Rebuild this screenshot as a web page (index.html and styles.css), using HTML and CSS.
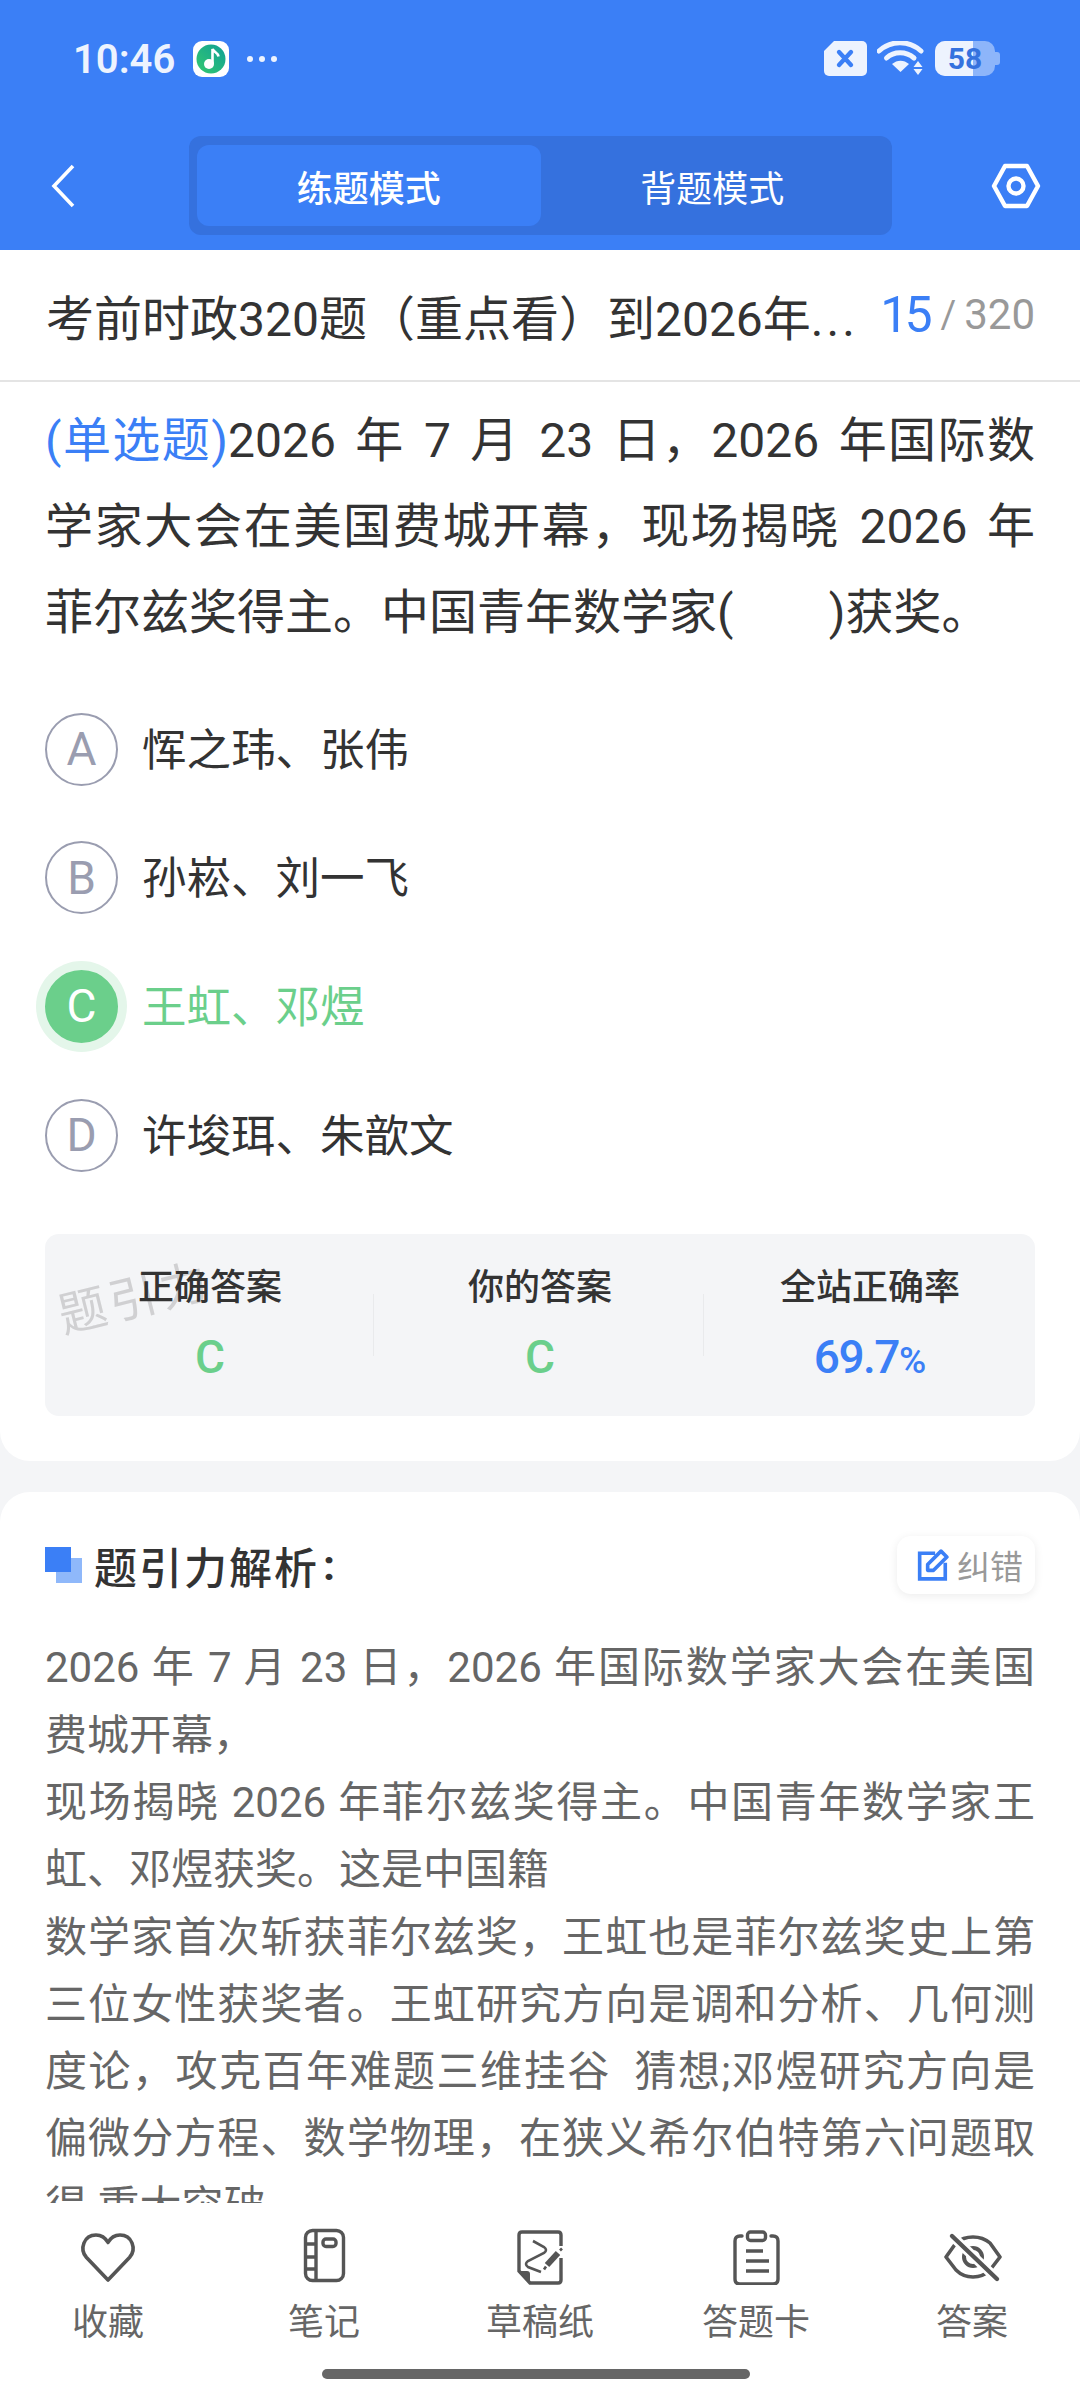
FILE: index.html
```html
<!DOCTYPE html>
<html lang="zh-CN">
<head>
  <meta charset="UTF-8">
  <title>练题模式</title>
  <link rel="stylesheet" href="styles.css">
</head>
<body>
  <div class="app">
    <header class="top">
      <div class="status-bar">
        <div class="status-left">
          <span class="clock">10:46</span>
          <svg class="music-icon" width="36" height="36" viewBox="0 0 36 36">
            <defs>
              <linearGradient id="musicGrad" x1="0" y1="1" x2="1" y2="0">
                <stop offset="0" stop-color="#35c96f"/>
                <stop offset="1" stop-color="#0f9f96"/>
              </linearGradient>
            </defs>
            <rect width="36" height="36" rx="9" fill="#fff"/>
            <circle cx="18" cy="18" r="14.500" fill="url(#musicGrad)"/>
            <circle cx="16" cy="23" r="5" fill="#fff"/>
            <path d="M19.500 23V8c1 3 5.500 3.500 6 7.500" fill="none" stroke="#fff" stroke-width="2.600"/>
          </svg>
          <span class="dots"><i></i><i></i><i></i></span>
        </div>
        <div class="status-right">
          <svg width="43" height="35" viewBox="0 0 43 35">
            <path d="M10 0H38a5 5 0 0 1 5 5V30a5 5 0 0 1-5 5H5a5 5 0 0 1-5-5V10Z" fill="#edf3fe"/>
            <path d="M15 11l12 13M27 11L15 24" stroke="#3b7ff6" stroke-width="4.400" stroke-linecap="round"/>
          </svg>
          <svg width="48" height="35" viewBox="0 0 48 35">
            <path d="M2 10C14 -1 32 -1 44 10" fill="none" stroke="#edf3fe" stroke-width="5" stroke-linecap="round"/>
            <path d="M9.500 17C17 10 29 10 37 17" fill="none" stroke="#edf3fe" stroke-width="5" stroke-linecap="round"/>
            <path d="M15 23C20 18.500 27 18.500 32 23L23.500 31Z" fill="#edf3fe"/>
            <path d="M41 20l4.500 6h-9ZM36.500 28h9L41 34Z" fill="#edf3fe"/>
          </svg>
          <div class="battery">
            <span class="battery-fill"></span>
            <span class="battery-num">58</span>
            <span class="battery-nub"></span>
          </div>
        </div>
      </div>
      <div class="nav-row">
        <svg class="back" width="24" height="44" viewBox="0 0 24 44">
          <path d="M22 2L3 22l19 20" fill="none" stroke="#fff" stroke-width="3.600"/>
        </svg>
        <div class="tabs">
          <div class="tab active">练题模式</div>
          <div class="tab">背题模式</div>
        </div>
        <svg class="gear" width="50" height="46" viewBox="0 0 50 46">
          <path d="M14 3H36L47 23 36 43H14L3 23Z" fill="none" stroke="#fff" stroke-width="4.400" stroke-linejoin="round"/>
          <circle cx="25" cy="23" r="7.500" fill="none" stroke="#fff" stroke-width="4.400"/>
        </svg>
      </div>
    </header>

    <div class="title-row">
      <div class="paper-name">考前时政320题（重点看）到2026年<span class="more">...</span></div>
      <div class="counter"><span class="cur">15</span><span class="slash">/</span><span class="total">320</span></div>
    </div>

    <main class="scroll">
      <section class="card question">
        <p class="stem">
          <span class="stem-line"><span class="q-type">(单选题)</span>2026 年 7 月 23 日，2026 年国际数</span>
          <span class="stem-line">学家大会在美国费城开幕，现场揭晓 2026 年</span>
          <span>菲尔兹奖得主。中国青年数学家(&nbsp;&nbsp;&nbsp;&nbsp;&nbsp;&nbsp;&nbsp;&nbsp;)获奖。</span>
        </p>
        <ul class="options">
          <li class="option"><span class="letter">A</span><span class="opt-text">恽之玮、张伟</span></li>
          <li class="option"><span class="letter">B</span><span class="opt-text">孙崧、刘一飞</span></li>
          <li class="option right"><span class="letter">C</span><span class="opt-text">王虹、邓煜</span></li>
          <li class="option"><span class="letter">D</span><span class="opt-text">许埈珥、朱歆文</span></li>
        </ul>
        <div class="stats">
          <div class="watermark">题引力</div>
          <div class="stat">
            <div class="stat-label">正确答案</div>
            <div class="stat-value green">C</div>
          </div>
          <div class="stat">
            <div class="stat-label">你的答案</div>
            <div class="stat-value green">C</div>
          </div>
          <div class="stat">
            <div class="stat-label">全站正确率</div>
            <div class="stat-value blue"><span class="rate">69.7</span><small>%</small></div>
          </div>
        </div>
      </section>

      <section class="card analysis">
        <div class="analysis-head">
          <div class="analysis-title"><span class="squares"></span>题引力解析<span class="colon">:</span></div>
          <div class="fix-btn">
            <svg width="32" height="32" viewBox="0 0 30 30">
              <path d="M17 4H2.500V28H26.500V13" fill="none" stroke="#3b7ff6" stroke-width="3.400"/>
              <path d="M10 20V14.500L22.500 2 28 7.500 15.500 20Z" fill="none" stroke="#3b7ff6" stroke-width="3.400" stroke-linejoin="round"/>
            </svg>
            纠错
          </div>
        </div>
        <p class="analysis-text">2026 年 7 月 23 日，2026 年国际数学家大会在美国费城开幕，<br>现场揭晓 2026 年菲尔兹奖得主。中国青年数学家王虹、邓煜获奖。这是中国籍<br>数学家首次斩获菲尔兹奖，王虹也是菲尔兹奖史上第三位女性获奖者。王虹研究方向是调和分析、几何测度论，攻克百年难题三维挂谷&nbsp;&nbsp;猜想;邓煜研究方向是偏微分方程、数学物理，在狭义希尔伯特第六问题取得 重大突破。</p>
      </section>
    </main>

    <nav class="bottom">
      <div class="bottom-items">
        <div class="bottom-item">
          <svg width="60" height="60" viewBox="0 0 60 60" fill="none" stroke="#555" stroke-width="3.600">
            <path d="M30 55L8.500 32.500C1 24 6 10 18 10 23 10 27.500 13 30 17.500 32.500 13 37 10 42 10 54 10 59 24 51.500 32.500Z" stroke-linejoin="round"/>
          </svg>
          <span>收藏</span>
        </div>
        <div class="bottom-item">
          <svg width="60" height="60" viewBox="0 0 60 60" fill="none" stroke="#555" stroke-width="3.400">
            <rect x="11.500" y="5.500" width="38" height="50" rx="7"/>
            <path d="M22 5.500V55.500M11.500 19H22M11.500 32H22M11.500 44H22"/>
            <rect x="29" y="14" width="13" height="7.500" rx="3"/>
          </svg>
          <span>笔记</span>
        </div>
        <div class="bottom-item">
          <svg width="60" height="60" viewBox="0 0 60 60" fill="none" stroke="#555" stroke-width="3.400">
            <path d="M51 21V10Q51 7 48 7H12Q9 7 9 10V46L20 58H48Q51 58 51 55V33"/>
            <path d="M9 46H17Q20 46 20 49V58Z" fill="#555" stroke="none"/>
            <path d="M23 16L34 22Q38 25 34 28L18 36Q14 39 18 42L31 47" stroke-width="2.600"/>
            <path d="M37 40L48 28" stroke-width="6"/>
            <path d="M34 44.500L36 41.500M50 25.500L52 23.500" stroke-width="2.600"/>
          </svg>
          <span>草稿纸</span>
        </div>
        <div class="bottom-item">
          <svg width="60" height="60" viewBox="0 0 60 60" fill="none" stroke="#555" stroke-width="3.400">
            <path d="M16 11H14Q9 11 9 16V54Q9 59 14 59H47Q52 59 52 54V16Q52 11 47 11H45" stroke-linecap="round"/>
            <rect x="21.500" y="7" width="18" height="8.500" rx="3"/>
            <path d="M20 26H37M20 36H43M20 46H43"/>
          </svg>
          <span>答题卡</span>
        </div>
        <div class="bottom-item">
          <svg width="60" height="60" viewBox="0 0 60 60" fill="none" stroke="#555" stroke-width="3.600">
            <path d="M4 32L14 18Q21 12 31 12T48 18L58 32 48 45Q41 52 31 52T14 45Z" stroke-linejoin="round"/>
            <path d="M22 32A9 9 0 0 0 40 32A9 9 0 0 0 22 32" stroke-width="4"/>
            <path d="M10 11L55 54" stroke="#fff" stroke-width="10"/>
            <path d="M10 11L55 54" stroke-width="4.400" stroke-linecap="round"/>
          </svg>
          <span>答案</span>
        </div>
      </div>
      <div class="home-bar"></div>
    </nav>
  </div>
</body>
</html>
```

FILE: styles.css
```css
* {
  box-sizing: border-box;
}

html,
body {
  margin: 0;
  padding: 0;
}

body {
  font-family: Roboto, "Noto Sans CJK SC", sans-serif;
  background-color: #f4f5f7;
  color: #333;
}

.app {
  width: 1080px;
  height: 2400px;
  display: flex;
  flex-direction: column;
  overflow: hidden;
}

/* blue header */
.top {
  height: 250px;
  flex-shrink: 0;
  background-color: #3b7ff6;
}

.status-bar {
  height: 136px;
  padding: 41px 85px 0 73px;
  display: flex;
  justify-content: space-between;
  align-items: flex-start;
}

.status-left {
  display: flex;
  align-items: center;
  height: 36px;
}

.clock {
  font-size: 40px;
  font-weight: 600;
  color: #edf3fe;
  width: 120px;
}

.dots {
  display: flex;
  gap: 6px;
  margin-left: 18px;
}

.dots i {
  width: 6px;
  height: 6px;
  border-radius: 50%;
  background-color: #edf3fe;
}

.status-right {
  display: flex;
  align-items: flex-start;
  gap: 10px;
}

.battery {
  position: relative;
  width: 60px;
  height: 35px;
  border-radius: 10px;
  background-color: #8db5fa;
  text-align: center;
}

.battery-fill {
  position: absolute;
  left: 0;
  top: 0;
  width: 38px;
  height: 35px;
  border-radius: 10px 0 0 10px;
  background-color: #edf3fe;
}

.battery-num {
  position: relative;
  font-size: 30px;
  font-weight: 700;
  line-height: 35px;
  color: #3572de;
}

.battery-nub {
  position: absolute;
  right: -5px;
  top: 11px;
  width: 5px;
  height: 13px;
  border-radius: 0 3px 3px 0;
  background-color: #8db5fa;
}

.nav-row {
  height: 99px;
  display: flex;
  align-items: center;
  position: relative;
}

.back {
  margin-left: 51px;
}

.tabs {
  width: 703px;
  height: 99px;
  margin-left: 114px;
  padding: 9px 8px;
  display: flex;
  background-color: #3571de;
  border-radius: 12px;
}

.tab {
  flex: 1;
  display: flex;
  align-items: center;
  justify-content: center;
  font-size: 36px;
  color: #fff;
  border-radius: 12px;
}

.tab.active {
  background-color: #3b7ff6;
  font-weight: 500;
}

.gear {
  margin-left: 99px;
}

/* paper title */
.title-row {
  height: 132px;
  flex-shrink: 0;
  padding: 0 45px 0 46px;
  display: flex;
  align-items: center;
  background-color: #fff;
  border-bottom: 2px solid #e4e4e4;
}

.paper-name {
  flex: 1;
  min-width: 0;
  font-size: 48px;
  white-space: nowrap;
}

.more {
  letter-spacing: 3px;
}

.counter {
  display: flex;
  align-items: center;
  color: #999;
  font-size: 42px;
  line-height: 60px;
}

.cur {
  font-size: 50px;
  letter-spacing: -4px;
  color: #3b7ff6;
}

.slash {
  margin: 0 8px 0 12px;
  font-size: 38px;
}

/* scrolling content */
.scroll {
  flex: 1;
  min-height: 0;
  overflow: hidden;
}

.card {
  background-color: #fff;
}

.question {
  padding: 16px 45px 45px;
  border-radius: 0 0 30px 30px;
}

.stem {
  margin: 0;
  font-size: 48px;
  line-height: 86px;
}

.stem-line {
  display: block;
  word-spacing: 6px;
  text-align: justify;
  text-align-last: justify;
}

.q-type {
  color: #3b7ff6;
}

.options {
  list-style: none;
  margin: 29px 0 35px;
  padding: 0;
}

.option {
  height: 128.600px;
  display: flex;
  align-items: center;
  font-size: 44.500px;
}

/* glyphs sit a little low next to the circle */
.opt-text {
  margin-bottom: 6px;
}

.letter {
  width: 73px;
  height: 73px;
  margin-right: 24px;
  flex-shrink: 0;
  display: flex;
  align-items: center;
  justify-content: center;
  border: 2px solid #9a9db0;
  border-radius: 50%;
  font-size: 46px;
  color: #9a9db0;
}

.option.right {
  color: #6bcf8b;
}

.option.right .letter {
  background-color: #6bcf8b;
  border-color: #6bcf8b;
  color: #fff;
  box-shadow: 0 0 0 9px #e4f6ea;
}

.stats {
  position: relative;
  height: 182px;
  display: flex;
  background-color: #f4f5f7;
  border-radius: 14px;
}

.stat {
  flex: 1;
  position: relative;
  text-align: center;
  padding-top: 30px;
}

.stat + .stat::before {
  content: "";
  position: absolute;
  left: -2px;
  top: 60px;
  height: 62px;
  width: 1px;
  background-color: #e9eaec;
}

.stat-label {
  font-size: 36px;
  font-weight: 500;
  line-height: 48px;
}

.stat-value {
  margin-top: 17px;
  font-size: 46px;
  font-weight: 500;
  line-height: 56px;
}

.rate {
  letter-spacing: -1.500px;
}

.stat-value small {
  font-size: 37px;
}

.green {
  color: #6bcf8b;
}

.blue {
  color: #3b7ff6;
}

.watermark {
  position: absolute;
  left: 11px;
  top: 25px;
  font-size: 48px;
  letter-spacing: 4px;
  color: #d0d0d2;
  transform: rotate(-14deg);
}

.analysis {
  margin-top: 31px;
  padding: 44px 45px 0;
  border-radius: 30px 30px 0 0;
}

.analysis-head {
  display: flex;
  justify-content: space-between;
  align-items: center;
  height: 58px;
}

.analysis-title {
  display: flex;
  align-items: center;
  font-size: 43px;
  font-weight: 500;
  letter-spacing: 2px;
}

.colon {
  margin-left: 4px;
  font-weight: 700;
}

/* two overlapping squares */
.squares {
  position: relative;
  width: 37px;
  height: 36px;
  margin-right: 12px;
}

.squares::before,
.squares::after {
  content: "";
  position: absolute;
  width: 26px;
  height: 25px;
}

.squares::before {
  right: 0;
  bottom: 0;
  background-color: #8fb8fa;
}

.squares::after {
  left: 0;
  top: 0;
  background-color: #3b7ff6;
}

.fix-btn {
  width: 138px;
  height: 58px;
  padding-left: 20px;
  display: flex;
  align-items: center;
  gap: 8px;
  background-color: #fff;
  border-radius: 14px;
  box-shadow: 0 2px 10px rgba(0, 0, 0, 0.08);
  font-size: 33px;
  color: #999;
}

.analysis-text {
  margin: 40px 0 0;
  font-size: 42px;
  line-height: 67.300px;
  color: #666;
  text-align: justify;
}

/* bottom bar */
.bottom {
  height: 197px;
  flex-shrink: 0;
  background-color: #fff;
  padding-top: 22px;
}

.bottom-items {
  display: flex;
}

.bottom-item {
  flex: 1;
  display: flex;
  flex-direction: column;
  align-items: center;
  font-size: 36px;
  line-height: 50px;
  color: #666;
}

.bottom-item span {
  margin-top: 13px;
}

.home-bar {
  width: 428px;
  height: 10px;
  margin: 21px 0 0 322px;
  border-radius: 5px;
  background-color: #666;
}
```
